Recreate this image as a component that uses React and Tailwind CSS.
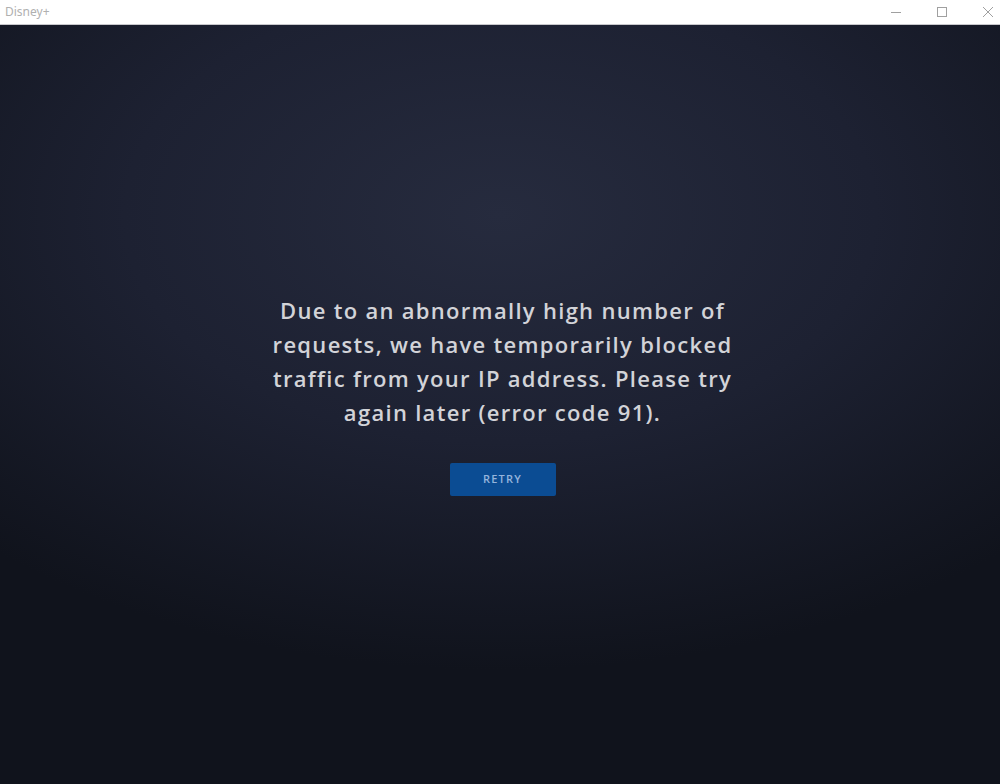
import React from "react";

function TitleBar() {
  return (
    <div className="h-[25px] bg-white flex items-center justify-between border-b border-[#c8c8cc] shrink-0">
      <span className="pl-[5px] text-[12px] text-[#b0b0b0] font-['Noto_Sans',sans-serif]">Disney+</span>
      <div className="flex items-center h-full mr-[-11px] text-[#a0a0a0]">
        <div className="w-[46px] h-full flex items-center justify-center">
          <svg width="10" height="10" viewBox="0 0 10 10"><path d="M0 5.5h10" stroke="currentColor" strokeWidth="1" /></svg>
        </div>
        <div className="w-[46px] h-full flex items-center justify-center">
          <svg width="10" height="10" viewBox="0 0 10 10"><rect x="0.5" y="0.5" width="9" height="9" fill="none" stroke="currentColor" strokeWidth="1" /></svg>
        </div>
        <div className="w-[46px] h-full flex items-center justify-center">
          <svg width="10" height="10" viewBox="0 0 10 10"><path d="M0 0L10 10M10 0L0 10" stroke="currentColor" strokeWidth="1" /></svg>
        </div>
      </div>
    </div>
  );
}

export default function App() {
  return (
    <div className="w-[1000px] h-[784px] flex flex-col overflow-hidden">
      <TitleBar />
      <main className="flex-1 flex flex-col items-center pl-[5px] bg-[radial-gradient(ellipse_75%_60%_at_50%_25%,#262b3e_0%,#1d2132_50%,#10131c_100%)]">
        <p className="mt-[268px] whitespace-nowrap text-center text-[22px] leading-[34px] font-semibold tracking-[1.3px] text-[#d2d3d8] font-['Open_Sans',sans-serif]">
          Due to an abnormally high number of
          <br />
          requests, we have temporarily blocked
          <br />
          traffic from your IP address. Please try
          <br />
          again later (error code 91).
        </p>
        <button className="mt-[34px] w-[106px] h-[33px] bg-[#0b4c93] rounded-[2px] text-[11px] font-semibold tracking-[1.2px] text-[#95b4dc] font-['Open_Sans',sans-serif]">
          RETRY
        </button>
      </main>
    </div>
  );
}
